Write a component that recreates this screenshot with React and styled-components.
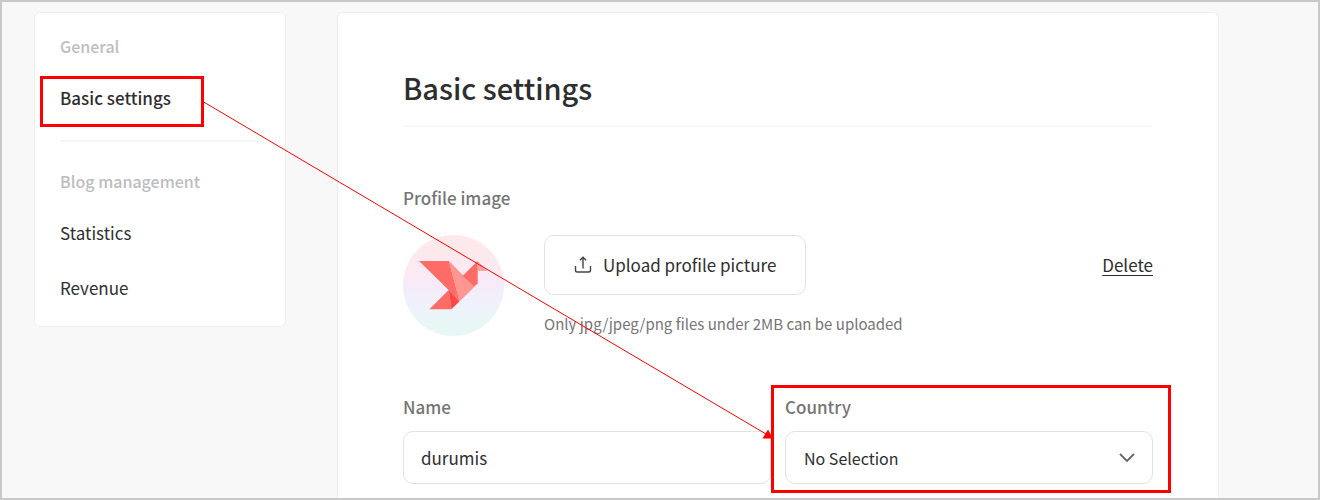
import React from 'react';
import styled, { createGlobalStyle } from 'styled-components';

const GlobalStyle = createGlobalStyle`
  :root {
    --color-page: #f8f8f8;
    --color-white: #fff;
    --color-border: #e2e2e2;
    --color-border-light: #eee;
    --color-text: #2e2e2e;
    --color-label: #757575;
    --color-muted: #bdbdbd;
    --color-mark: #f00;
  }

  *,
  *::before,
  *::after {
    box-sizing: border-box;
  }

  body {
    margin: 0;
    color: var(--color-text);
    font-family: 'Noto Sans CJK KR', 'Noto Sans', sans-serif;
    font-size: 17px;
    line-height: 24px;
  }

  button,
  input,
  select {
    color: inherit;
    font: inherit;
  }
`;

const Page = styled.div`
  position: relative;
  display: flex;
  min-height: 100vh;
  padding: 10px 32px 0;
  border: 2px solid #c8c8c8;
  background: var(--color-page);
`;

const Layout = styled.div`
  display: flex;
  flex: 1;
  gap: 51px;
  max-width: 1185px;
`;

const Sidebar = styled.nav`
  flex: 0 0 252px;
  align-self: flex-start;
  padding: 21px 25px 11px;
  border: 1px solid var(--color-border-light);
  border-radius: 6px;
  background: var(--color-white);
`;

const NavGroup = styled.section`
  & + & {
    margin-top: 15px;
    padding-top: 27px;
    border-top: 2px solid #f5f5f5;
  }
`;

const NavTitle = styled.h2`
  margin: 0 0 13px;
  color: var(--color-muted);
  font-size: 16px;
  font-weight: 500;
  line-height: 24px;
`;

const NavList = styled.ul`
  display: flex;
  flex-direction: column;
  gap: 1px;
  margin: 0;
  padding: 0;
  list-style: none;
`;

const NavItem = styled.li`
  padding: 15px 0;
`;

const NavLink = styled.a`
  position: relative;
  display: block;
  width: fit-content;
  color: inherit;
  font-weight: ${({ $active }) => ($active ? 500 : 400)};
  text-decoration: none;
`;

const Mark = styled.span`
  position: absolute;
  inset: ${({ $inset }) => $inset};
  border: 3px solid var(--color-mark);
  pointer-events: none;
`;

const Panel = styled.main`
  flex: 1;
  min-width: 0;
  padding: 50px 65px 14px;
  border: 1px solid var(--color-border-light);
  border-bottom: none;
  border-radius: 6px 6px 0 0;
  background: var(--color-white);
`;

const Title = styled.h1`
  margin: 0;
  padding-bottom: 14px;
  border-bottom: 2px solid #f8f8f8;
  font-size: 29px;
  font-weight: 500;
  line-height: 48px;
`;

const Label = styled.label`
  display: block;
  margin-bottom: 12px;
  color: var(--color-label);
  font-weight: 500;
`;

const ProfileSection = styled.section`
  margin: 59px 0;
`;

const ProfileRow = styled.div`
  display: flex;
  align-items: flex-start;
  gap: 40px;
  margin-top: 25px;
`;

const Avatar = styled.svg`
  flex: none;
  width: 101px;
  height: 101px;
`;

const Upload = styled.div`
  flex: 1;
`;

const UploadButton = styled.button`
  display: flex;
  align-items: center;
  gap: 11px;
  height: 60px;
  padding: 0 29px;
  border: 1px solid var(--color-border);
  border-radius: 10px;
  background: var(--color-white);
`;

const Hint = styled.p`
  margin: 17px 0 0;
  color: var(--color-label);
  font-size: 15px;
`;

const DeleteLink = styled.a`
  margin-top: 18px;
  color: inherit;
  text-underline-offset: 3px;
`;

const Fields = styled.div`
  display: grid;
  grid-template-columns: 1fr 1fr;
  gap: 14px;
`;

const Field = styled.div`
  position: relative;
`;

const Input = styled.input`
  display: block;
  width: 100%;
  height: 53px;
  padding: 0 17px;
  border: 1px solid var(--color-border);
  border-radius: 10px;
  background: var(--color-white);
`;

const SelectBox = styled.div`
  display: grid;
  align-items: center;

  & > * {
    grid-area: 1 / 1;
  }

  & > svg {
    justify-self: end;
    margin-right: 17px;
    pointer-events: none;
  }
`;

const Select = styled.select`
  width: 100%;
  height: 53px;
  padding: 0 18px;
  border: 1px solid var(--color-border);
  border-radius: 10px;
  background: var(--color-white);
  font-size: 16px;
  appearance: none;
`;

const Arrow = styled.svg`
  position: absolute;
  top: 0;
  left: 0;
  pointer-events: none;
`;

const navGroups = [
  { title: 'General', items: ['Basic settings'] },
  { title: 'Blog management', items: ['Statistics', 'Revenue'] },
];

const UploadIcon = () => (
  <svg width="18" height="18" viewBox="0 0 18 18" fill="none" stroke="#444" strokeWidth="1.4" aria-hidden="true">
    <path d="M1.500 10v4.200q0 1.800 1.800 1.800h11.400q1.800 0 1.800-1.800V10" />
    <path d="M9 12.500V1.500M5.900 4.300L9 1.200l3.100 3.100" />
  </svg>
);

const ChevronIcon = () => (
  <svg width="18" height="18" viewBox="0 0 18 18" fill="none" stroke="#666" strokeWidth="1.8" aria-hidden="true">
    <path d="M2 5l7 7 7-7" />
  </svg>
);

const ProfileAvatar = () => (
  <Avatar viewBox="0 0 101 101" role="img" aria-labelledby="profile-label">
    <defs>
      <linearGradient id="avatar-bg" x1="0" y1="0" x2="0" y2="1">
        <stop offset="0.1" stopColor="#fde9e9" />
        <stop offset="0.48" stopColor="#f8eaf8" />
        <stop offset="0.66" stopColor="#eff1fc" />
        <stop offset="0.9" stopColor="#e8f7f5" />
      </linearGradient>
    </defs>
    <circle cx="50.5" cy="50.5" r="50.5" fill="url(#avatar-bg)" />
    <path d="M16 26h30l10.500 40L45.700 55z" fill="#ff6b66" />
    <path d="M46 26l25.500 25.700L56.500 66.500z" fill="#ff9693" />
    <path d="M59.700 40.700L74.700 26v22.300l-3.500 3.400z" fill="#ff6b66" />
    <path d="M74.700 26l9.500 10h-9.500z" fill="#ffa3a0" />
    <path d="M26.300 74.300L45.700 55l2.800 19.300z" fill="#ff6b66" />
    <path d="M45.700 55l10.800 11.300-8 8z" fill="#ff4742" />
  </Avatar>
);

const App = () => (
  <>
    <GlobalStyle />
    <Page>
      <Layout>
        <Sidebar>
          {navGroups.map(({ title, items }, groupIndex) => (
            <NavGroup key={title}>
              <NavTitle>{title}</NavTitle>
              <NavList>
                {items.map((item) => (
                  <NavItem key={item}>
                    <NavLink href="#" $active={groupIndex === 0}>
                      {item}
                      {groupIndex === 0 && <Mark $inset="-10px -33px -17px -20px" />}
                    </NavLink>
                  </NavItem>
                ))}
              </NavList>
            </NavGroup>
          ))}
        </Sidebar>
        <Panel>
          <Title>Basic settings</Title>
          <ProfileSection>
            <Label as="div" id="profile-label">Profile image</Label>
            <ProfileRow>
              <ProfileAvatar />
              <Upload>
                <UploadButton type="button">
                  <UploadIcon />
                  Upload profile picture
                </UploadButton>
                <Hint>Only jpg/jpeg/png files under 2MB can be uploaded</Hint>
              </Upload>
              <DeleteLink href="#">Delete</DeleteLink>
            </ProfileRow>
          </ProfileSection>
          <Fields>
            <Field>
              <Label htmlFor="name">Name</Label>
              <Input id="name" name="name" type="text" defaultValue="durumis" />
            </Field>
            <Field>
              <Label htmlFor="country">Country</Label>
              <SelectBox>
                <Select id="country" name="country">
                  <option>No Selection</option>
                </Select>
                <ChevronIcon />
              </SelectBox>
              <Mark $inset="-10px -18px -9px -14px" />
            </Field>
          </Fields>
        </Panel>
      </Layout>
      <Arrow width="780" height="450" aria-hidden="true">
        <path d="M200 99L764 432" stroke="#f00" strokeWidth="1" />
        <path d="M771 436.500H760.500L766 427.500z" fill="#f00" />
      </Arrow>
    </Page>
  </>
);

export default App;
